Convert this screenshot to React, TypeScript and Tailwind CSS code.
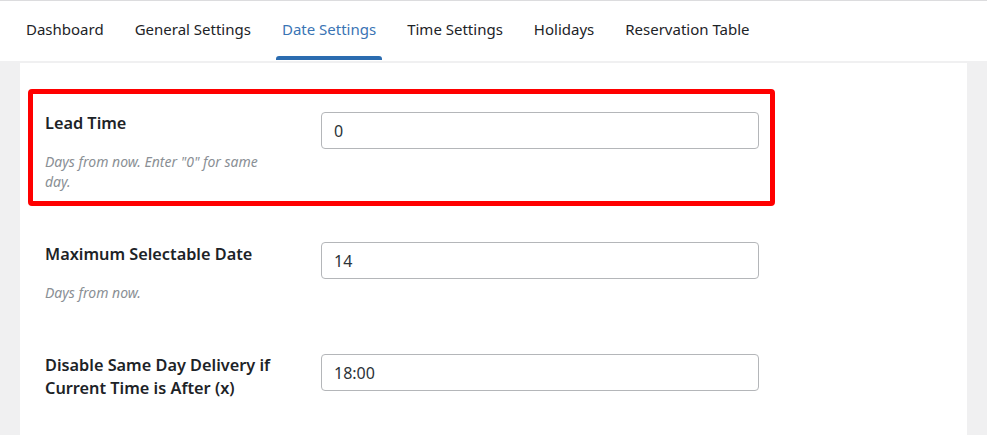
import React from "react";

const tabs = ["Dashboard", "General Settings", "Date Settings", "Time Settings", "Holidays", "Reservation Table"];

function Row({ label, desc, value, lp }: { label: React.ReactNode; desc?: string; value: string; lp: string }) {
  return (
    <div className="flex">
      <div className={`w-[276px] shrink-0 ${lp}`}>
        <div className="text-[16.3px] leading-[23px] font-semibold text-[#1d2327]">{label}</div>
        {desc && (
          <div className="mt-[17px] w-[240px] text-[14px] leading-[20px] italic text-[#8a8f95]">{desc}</div>
        )}
      </div>
      <div className="w-[438px] h-[37px] border border-[#b4b6b9] rounded-[4px] flex items-center pl-[12px] text-[16px] text-[#2c3338] mt-[1px]">
        {value}
      </div>
    </div>
  );
}

export default function App() {
  return (
    <div className="w-[987px] h-[435px] overflow-hidden bg-[#f0f0f1]" style={{ fontFamily: '"Noto Sans", "Open Sans", sans-serif' }}>
      <div className="h-[61px] bg-white border-t border-[#dcdcde] flex items-stretch pl-[21px] gap-[21px]">
        {tabs.map((t) => {
          const active = t === "Date Settings";
          return (
            <div key={t} className={`relative flex items-start pt-[16px] ${active ? "px-[6px] -mx-[1px]" : "px-[5px]"}`}>
              <span className={`text-[15px] leading-[24px] ${active ? "text-[#3a74b4]" : "text-[#1d2327]"}`}>{t}</span>
              {active && <div className="absolute left-0 right-0 bottom-[1px] h-[4px] rounded-t-[3px] bg-[#2b6cb0]" />}
            </div>
          );
        })}
      </div>
      <div className="mx-[20px] mt-[2px] h-[400px] bg-white pt-[26px]">
        <div className="ml-[8px] w-[747px] border-[5px] border-[#ff0000] rounded-[4px] pl-[12px] pt-[17px] pb-[9px]">
          <Row lp="pt-[1px]" label="Lead Time" desc={'Days from now. Enter "0" for same day.'} value="0" />
        </div>
        <div className="pl-[25px] mt-[35px]">
          <Row lp="pt-[2px]" label="Maximum Selectable Date" desc="Days from now." value="14" />
        </div>
        <div className="pl-[25px] mt-[50px]">
          <Row lp="pt-[1px]" label={<>Disable Same Day Delivery if<br />Current Time is After (x)</>} value="18:00" />
        </div>
      </div>
    </div>
  );
}
